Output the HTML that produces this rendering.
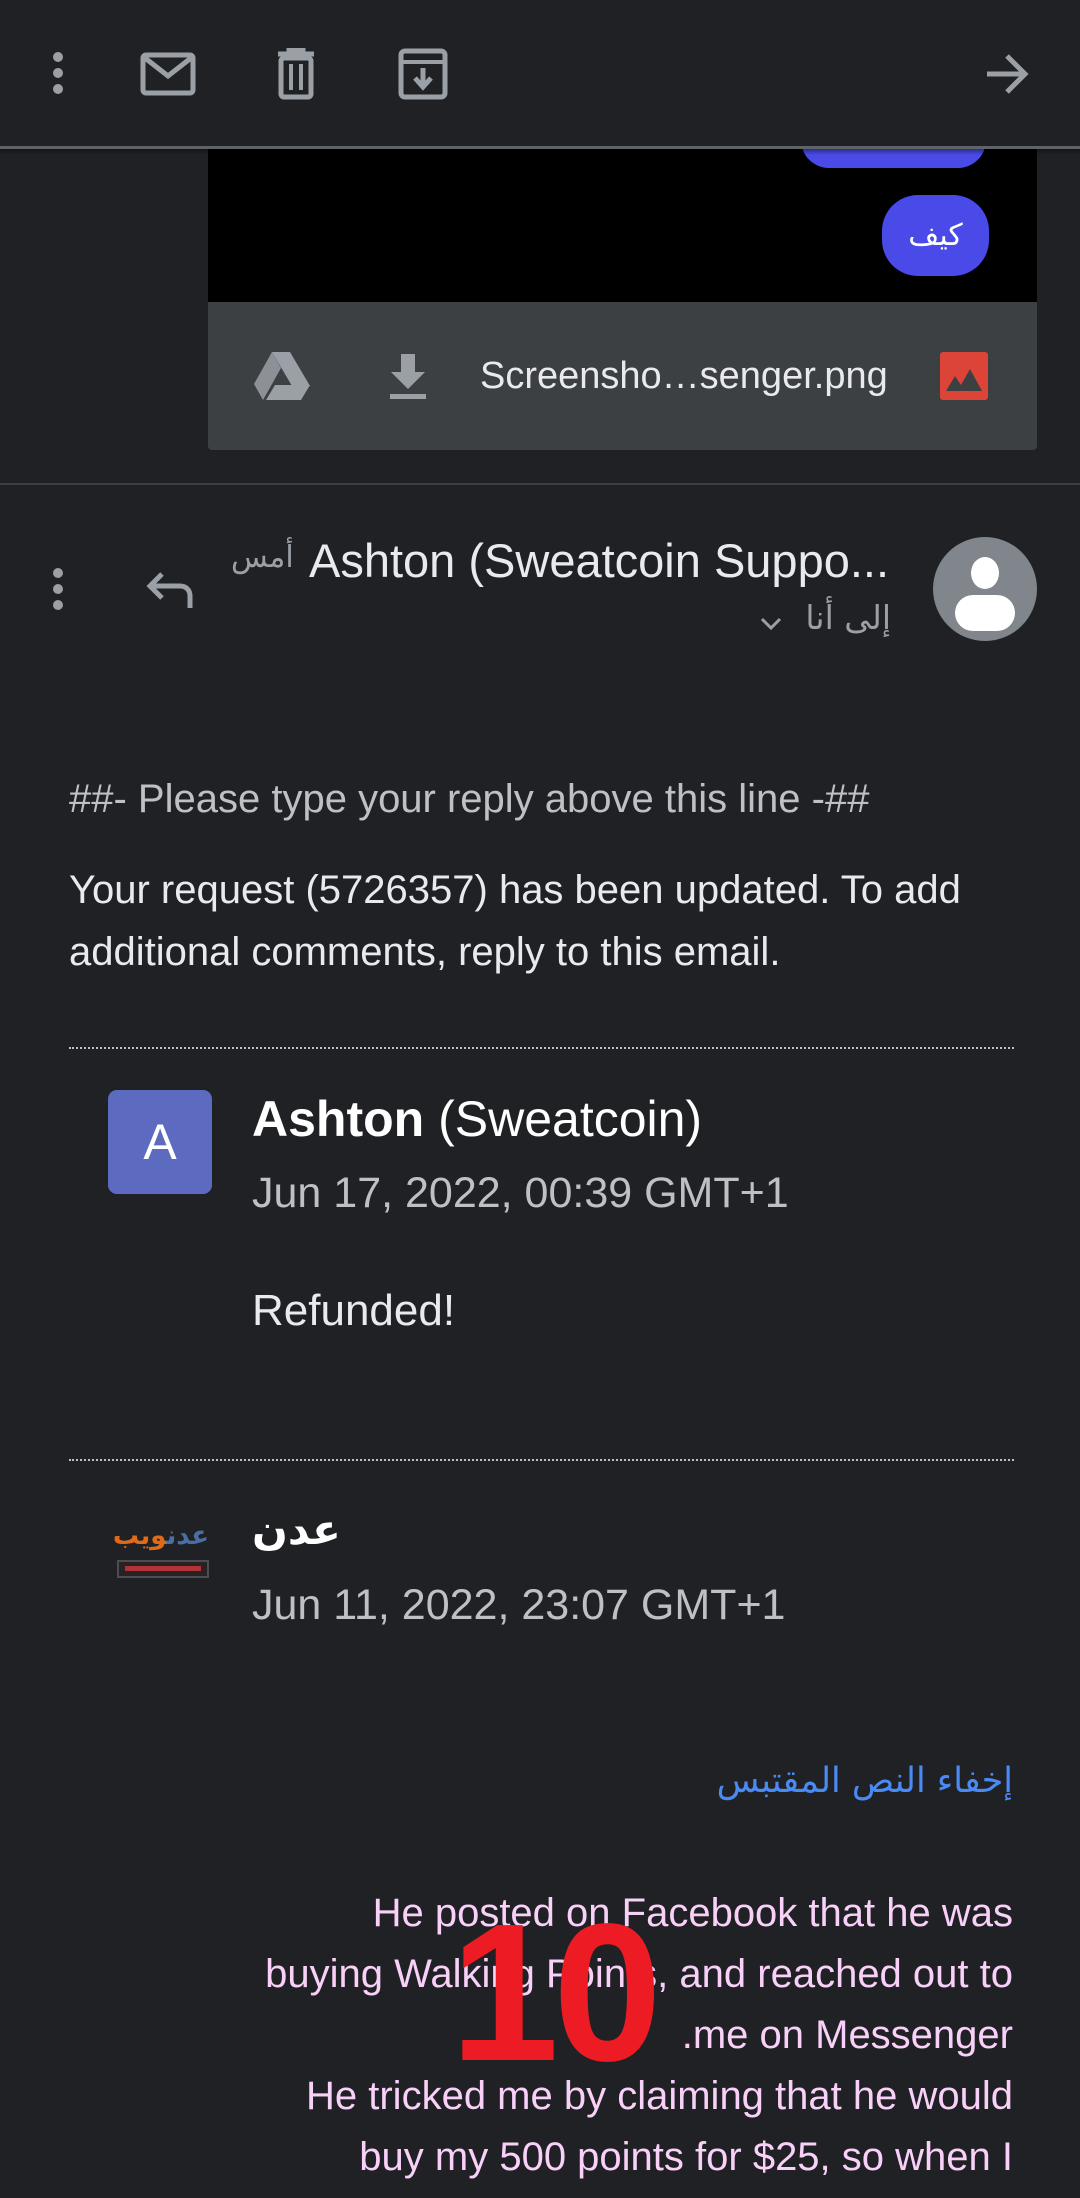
<!DOCTYPE html>
<html><head><meta charset="utf-8">
<style>
*{margin:0;padding:0;box-sizing:border-box}
html,body{width:1080px;height:2198px;background:#202124;overflow:hidden}
body{position:relative;font-family:"Liberation Sans","Noto Sans CJK SC",sans-serif;color:#e8eaed}
.a{position:absolute;white-space:nowrap}
</style></head><body>

<div class="a" style="left:208px;top:148px;width:829px;height:154px;background:#000"></div>
<div class="a" style="left:801px;top:140px;width:185px;height:28px;background:#4a4ae8;border-radius:0 0 30px 30px"></div>
<div class="a" style="left:882px;top:195px;width:107px;height:81px;background:#4a4ae8;border-radius:36px;color:#fff;font-size:30px;line-height:81px;text-align:center;font-family:'DejaVu Sans',sans-serif">كيف</div>
<div class="a" style="left:208px;top:302px;width:829px;height:148px;background:#3c4043;border-radius:0 0 4px 4px"></div>
<svg class="a" style="left:252px;top:352px" width="60" height="50" viewBox="0 0 60 50">
<path d="M20 0h18l20 34h-18z" fill="#9aa0a6"/><path d="M20 0l9 16-18 32-9-16z" fill="#9aa0a6" opacity=".85"/><path d="M14 48l9-15h35l-9 15z" fill="#9aa0a6"/></svg>
<svg class="a" style="left:387px;top:352px" width="42" height="48" viewBox="0 0 42 48">
<path d="M14 2h14v18h10L21 37 4 20h10z" fill="#9aa0a6"/><rect x="3" y="42" width="36" height="5" fill="#9aa0a6"/></svg>
<div class="a" style="left:480px;top:355px;font-size:38px;color:#e8eaed">Screensho…senger.png</div>
<svg class="a" style="left:940px;top:352px" width="48" height="48" viewBox="0 0 48 48">
<rect width="48" height="48" rx="3" fill="#db4437"/><path d="M6 39l9-15 6 9 9-16 12 22z" fill="#3c4043"/></svg>

<div class="a" style="left:0;top:0;width:1080px;height:146px;background:#202124"></div>
<div class="a" style="left:0;top:146px;width:1080px;height:3px;background:#5f6368"></div>
<div class="a" style="left:0;top:149px;width:1080px;height:6px;background:linear-gradient(#0006,#0000)"></div>
<svg class="a" style="left:48px;top:50px" width="20" height="48" viewBox="0 0 20 48">
<circle cx="10" cy="7" r="5" fill="#9aa0a6"/><circle cx="10" cy="23" r="5" fill="#9aa0a6"/><circle cx="10" cy="39" r="5" fill="#9aa0a6"/></svg>
<svg class="a" style="left:140px;top:52px" width="56" height="44" viewBox="0 0 56 44">
<rect x="3" y="3" width="50" height="38" rx="3" fill="none" stroke="#9aa0a6" stroke-width="5"/><path d="M5 6l23 18 23-18" fill="none" stroke="#9aa0a6" stroke-width="5"/></svg>
<svg class="a" style="left:274px;top:48px" width="44" height="52" viewBox="0 0 44 52">
<path d="M4 6h36M15 6V2h14v4" stroke="#9aa0a6" stroke-width="5" fill="none"/><rect x="7" y="10" width="30" height="39" rx="3" fill="none" stroke="#9aa0a6" stroke-width="5"/><path d="M17 16v26M27 16v26" stroke="#9aa0a6" stroke-width="4"/></svg>
<svg class="a" style="left:398px;top:48px" width="50" height="52" viewBox="0 0 50 52">
<rect x="3" y="3" width="44" height="46" rx="4" fill="none" stroke="#9aa0a6" stroke-width="5"/><path d="M3 14h44" stroke="#9aa0a6" stroke-width="4"/><path d="M25 20v18M17 30l8 9 8-9" stroke="#9aa0a6" stroke-width="5" fill="none"/></svg>
<svg class="a" style="left:985px;top:52px" width="44" height="44" viewBox="0 0 44 44">
<path d="M2 22h38M22 4l18 18-18 18" stroke="#9aa0a6" stroke-width="5" fill="none"/></svg>

<div class="a" style="left:0;top:483px;width:1080px;height:2px;background:#3c4043"></div>

<svg class="a" style="left:48px;top:566px" width="20" height="48" viewBox="0 0 20 48">
<circle cx="10" cy="7" r="5" fill="#9aa0a6"/><circle cx="10" cy="23" r="5" fill="#9aa0a6"/><circle cx="10" cy="39" r="5" fill="#9aa0a6"/></svg>
<svg class="a" style="left:144px;top:570px" width="50" height="40" viewBox="0 0 50 40">
<path d="M46 38V26c0-6-4-10-10-10H6M18 4L6 16l12 12" stroke="#9aa0a6" stroke-width="5" fill="none"/></svg>
<div class="a" style="left:231px;top:540px;font-size:30px;color:#9aa0a6;font-family:'DejaVu Sans',sans-serif">أمس</div>
<div class="a" style="left:309px;top:533px;font-size:47px;color:#e8eaed">Ashton (Sweatcoin Suppo...</div>
<div class="a" style="left:795px;top:598px;font-size:33px;color:#9aa0a6;font-family:'DejaVu Sans',sans-serif;direction:rtl;width:96px;text-align:right">إلى أنا</div>
<svg class="a" style="left:760px;top:616px" width="22" height="16" viewBox="0 0 22 16"><path d="M2 3l9 9 9-9" stroke="#9aa0a6" stroke-width="3" fill="none"/></svg>
<div class="a" style="left:933px;top:537px;width:104px;height:104px;border-radius:50%;background:#80868b;overflow:hidden">
<div style="position:absolute;left:38px;top:20px;width:28px;height:32px;border-radius:50%;background:#fff"></div>
<div style="position:absolute;left:22px;top:58px;width:60px;height:36px;border-radius:30px;background:#fff"></div></div>

<div class="a" style="left:69px;top:777px;font-size:40px;color:#bdc1c6">##- Please type your reply above this line -##</div>
<div class="a" style="left:69px;top:859px;font-size:40px;color:#e8eaed;line-height:62px;white-space:normal;width:950px">Your request (5726357) has been updated. To add additional comments, reply to this email.</div>
<div class="a" style="left:69px;top:1047px;width:945px;border-top:2px dotted #bdc1c6"></div>

<div class="a" style="left:108px;top:1090px;width:104px;height:104px;background:#5c6bc0;border-radius:9px;color:#fff;font-size:50px;line-height:104px;text-align:center">A</div>
<div class="a" style="left:252px;top:1090px;font-size:50px;color:#fff"><b>Ashton</b> (Sweatcoin)</div>
<div class="a" style="left:252px;top:1169px;font-size:43px;color:#bdc1c6">Jun 17, 2022, 00:39 GMT+1</div>
<div class="a" style="left:252px;top:1286px;font-size:44px;color:#e8eaed">Refunded!</div>
<div class="a" style="left:69px;top:1459px;width:945px;border-top:2px dotted #bdc1c6"></div>

<div class="a" style="left:108px;top:1516px;width:106px;height:40px;font-size:26px;font-weight:bold;font-family:'DejaVu Sans',sans-serif;text-align:center;line-height:40px;direction:rtl"><span style="color:#4a6fa5">عدن</span><span style="color:#e06a1a">ويب</span></div>
<div class="a" style="left:117px;top:1560px;width:92px;height:18px;border:2px solid #4a4d52;background:#2a2222"><div style="margin:4px 6px;height:5px;background:#b0333a"></div></div>
<div class="a" style="left:252px;top:1505px;font-size:42px;color:#fff;font-weight:bold;font-family:'DejaVu Sans',sans-serif">عدن</div>
<div class="a" style="left:252px;top:1581px;font-size:43px;color:#bdc1c6">Jun 11, 2022, 23:07 GMT+1</div>

<div class="a" style="right:67px;top:1761px;font-size:35px;color:#4a8af4;font-family:'DejaVu Sans',sans-serif;direction:rtl">إخفاء النص المقتبس</div>

<div class="a" style="right:67px;top:1883px;font-size:40px;color:#f8d0f8;line-height:61px;text-align:right">He posted on Facebook that he was<br>buying Walking Points, and reached out to<br>.me on Messenger<br>He tricked me by claiming that he would<br>buy my 500 points for $25, so when I</div>

<div class="a" style="left:450px;top:1898px;font-size:196px;font-weight:bold;color:#ed1c24;line-height:190px;letter-spacing:-6px">10</div>
</body></html>
